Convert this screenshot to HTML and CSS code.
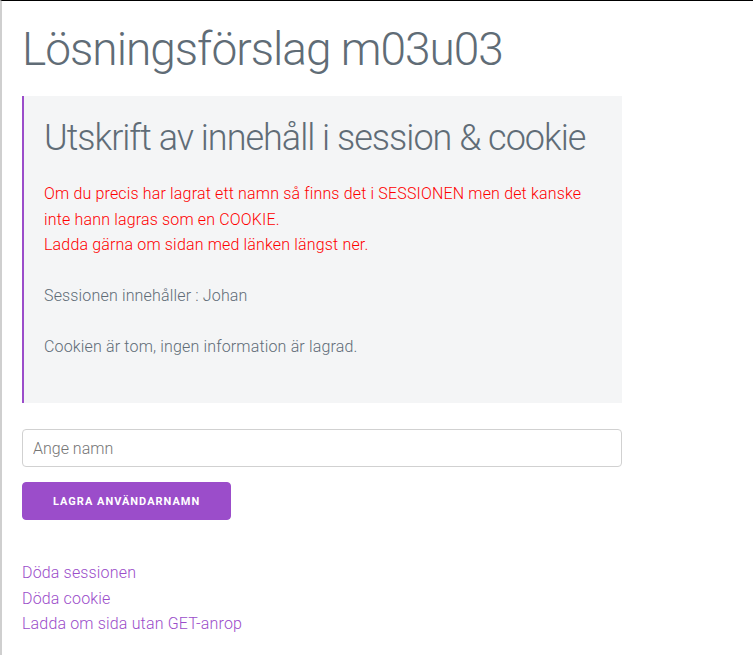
FILE: index.html
```html
<!DOCTYPE html>
<html lang="sv">
<head>
    <meta charset="UTF-8">
    <meta name="viewport" content="width=device-width, initial-scale=1.0">
    <title>Lösningsförslag m03u03</title>
    <link rel="stylesheet" href="styles.css">
</head>
<body>
    <div class="container">
        <h1>Lösningsförslag m03u03</h1>

        <div class="output-box">
            <h2>Utskrift av innehåll i session &amp; cookie</h2>
            <p class="notice">Om du precis har lagrat ett namn så finns det i SESSIONEN men det kanske inte hann lagras som en COOKIE.<br>Ladda gärna om sidan med länken längst ner.</p>
            <p>Sessionen innehåller : Johan</p>
            <p>Cookien är tom, ingen information är lagrad.</p>
        </div>

        <form class="name-form" method="post">
            <input type="text" name="username" placeholder="Ange namn">
            <button type="submit" class="btn">Lagra användarnamn</button>
        </form>

        <div class="links">
            <a href="?kill=session">Döda sessionen</a>
            <a href="?kill=cookie">Döda cookie</a>
            <a href="index.html">Ladda om sida utan GET-anrop</a>
        </div>
    </div>
</body>
</html>
```

FILE: styles.css
```css
* {
    margin: 0;
    padding: 0;
    box-sizing: border-box;
}
body {
    font-family: Roboto, 'Helvetica Neue', Arial, sans-serif;
    font-weight: 300;
    font-size: 16px;
    letter-spacing: 0.01em;
    line-height: 1.6;
    color: #606c76;
    background: #fff;
    border-top: 1px solid #000;
    border-left: 2px solid #cfcfcf;
    min-height: 100vh;
    position: relative;
}
body::before {
    content: "";
    position: absolute;
    left: -2px;
    top: 0;
    width: 2px;
    height: 37px;
    background: #3a3a3a;
}
.container {
    width: 620px;
    padding: 21px 0 0 20px;
}
h1 {
    font-size: 46px;
    font-weight: 300;
    letter-spacing: -1px;
    line-height: 1.2;
    margin-bottom: 19px;
}
.output-box {
    width: 600px;
    background: #f4f5f6;
    border-left: 2px solid #9b4dca;
    padding: 20px 20px 19px;
    margin-bottom: 26px;
}
h2 {
    font-size: 36px;
    font-weight: 300;
    letter-spacing: -1px;
    line-height: 1.25;
    margin-bottom: 20px;
}
p {
    margin-bottom: 25px;
}
.notice {
    color: #ff0000;
}
.name-form {
    display: flex;
    flex-direction: column;
    align-items: flex-start;
    width: 600px;
    margin-bottom: 40px;
}
input {
    width: 100%;
    height: 38px;
    padding: 6px 10px;
    border: 1px solid #d1d1d1;
    border-radius: 4px;
    font-family: inherit;
    font-weight: 300;
    font-size: 16px;
    color: #606c76;
    margin-bottom: 15px;
}
input::placeholder {
    color: #757575;
}
.btn {
    height: 38px;
    padding: 0 30px;
    background: #9b4dca;
    border: 1px solid #9b4dca;
    border-radius: 4px;
    color: #fff;
    font-family: inherit;
    font-size: 11px;
    font-weight: 700;
    letter-spacing: 1px;
    text-transform: uppercase;
    cursor: pointer;
}
.links a {
    display: block;
    color: #9b4dca;
    text-decoration: none;
}
```
